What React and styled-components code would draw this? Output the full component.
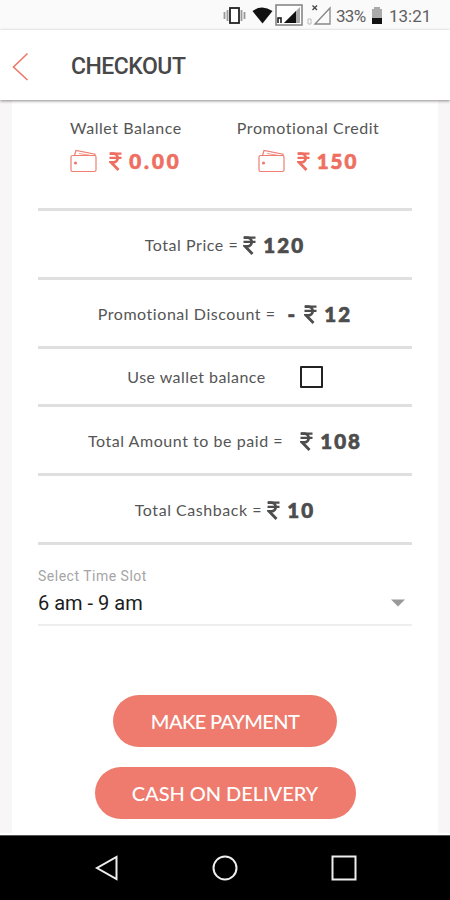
import { useState } from "react";
import styled, { createGlobalStyle } from "styled-components";

const GlobalStyle = createGlobalStyle`
  * {
    box-sizing: border-box;
  }

  body {
    margin: 0;
    background: #fff;
    font-family: Lato, "Liberation Sans", sans-serif;
  }
`;

const Screen = styled.div`
  display: flex;
  flex-direction: column;
  width: 450px;
  height: 900px;
  overflow: hidden;
  background: #fff;
`;

const StatusBar = styled.div`
  display: flex;
  align-items: center;
  flex: 0 0 30px;
  padding: 2px 19px 0 0;
  justify-content: flex-end;
  background: #fafafa;
  color: #606060;
  font-family: Roboto, sans-serif;
  font-size: 17px;
  line-height: 28px;
`;

const StatusIcons = styled.svg`
  display: block;
  width: 112px;
  height: 28px;
  margin-right: 3px;
`;

const Battery = styled.svg`
  display: block;
  width: 12px;
  height: 20px;
  margin: 0 6px 0 4px;
`;

const StatusText = styled.span`
  width: ${(props) => props.$width}px;
  white-space: nowrap;
  letter-spacing: ${(props) => props.$spacing || 0}px;
`;

const Header = styled.header`
  display: flex;
  align-items: center;
  flex: 0 0 70px;
  padding: 3px 0 0 12px;
  background: #fff;
  box-shadow: 0 1px 3px rgba(0, 0, 0, 0.45);
  z-index: 1;
`;

const BackIcon = styled.svg`
  display: block;
  width: 17px;
  height: 30px;
  margin-right: 42px;
`;

const Title = styled.h1`
  margin: 0;
  padding-top: 1px;
  color: #484848;
  font-family: Roboto, sans-serif;
  font-size: 23px;
  font-weight: 500;
  line-height: 30px;
  letter-spacing: -0.5px;
`;

const Content = styled.main`
  flex: 0 0 733px;
  padding: 15px 26px 0;
  border: solid #f8f6f7;
  border-width: 0 12px;
`;

const Balances = styled.section`
  display: flex;
  height: 96px;
  padding-left: 32px;
  gap: 55px;
  border-bottom: 3px solid #dfdfdf;
`;

const Balance = styled.div`
  display: flex;
  flex-direction: column;
  align-items: center;
  gap: 7px;
`;

const Label = styled.span`
  color: #555;
  font-size: 16px;
  line-height: 26px;
  letter-spacing: ${(props) => props.$spacing ?? 0.55}px;
  white-space: nowrap;
`;

const BalanceValue = styled.div`
  display: flex;
  align-items: center;
  gap: 12px;
`;

const WalletIcon = styled.svg`
  display: block;
  width: 27px;
  height: 24px;
`;

const Amount = styled.strong`
  display: flex;
  align-items: center;
  gap: 7px;
  color: ${(props) => props.$color || "#4d4d4d"};
  font-size: 20.5px;
  font-weight: 900;
  line-height: 26px;
  letter-spacing: ${(props) => props.$spacing || 2.1}px;
  -webkit-text-stroke: 0.7px currentColor;
  white-space: nowrap;
`;

const RupeeIcon = styled.svg`
  display: block;
  width: 13px;
  height: 19px;
`;

const Row = styled.div`
  display: flex;
  align-items: center;
  justify-content: center;
  gap: ${(props) => props.$gap}px;
  height: ${(props) => props.$height || 69}px;
  padding-top: ${(props) => props.$top ?? 2}px;
  border-bottom: 3px solid #dfdfdf;
`;

const Checkbox = styled.button`
  width: 23px;
  height: 22px;
  padding: 0;
  border: 2px solid #222;
  border-radius: 1px;
  background: ${(props) => (props.$checked ? "#ee7b6d" : "#fff")};
`;

const TimeSlot = styled.section`
  height: 81px;
  padding-top: 20px;
  border-bottom: 2px solid #eee;
`;

const SlotLabel = styled.div`
  color: #a5a5a5;
  font-family: Roboto, sans-serif;
  font-size: 14px;
  line-height: 22px;
  letter-spacing: 0.5px;
`;

const SlotValue = styled.div`
  display: flex;
  align-items: center;
  justify-content: space-between;
  padding-right: 7px;
  color: #1c1c1c;
  font-family: Roboto, sans-serif;
  font-size: 20px;
  line-height: 32px;
`;

const Caret = styled.svg`
  display: block;
  width: 14px;
  height: 8px;
`;

const Actions = styled.div`
  display: flex;
  flex-direction: column;
  align-items: center;
  gap: 20px;
  padding-top: 69px;
`;

const ActionButton = styled.button`
  width: ${(props) => props.$width}px;
  height: 52px;
  padding: 0;
  border: none;
  border-radius: 26px;
  background: #ee7b6d;
  color: #fff;
  font-family: inherit;
  font-size: 20px;
  font-weight: 500;
  letter-spacing: ${(props) => props.$spacing}px;
`;

const NavBar = styled.nav`
  display: flex;
  align-items: center;
  justify-content: space-between;
  height: 65px;
  margin-top: 2px;
  padding: 0 92px;
  background: #000;
  border-top: 1px solid #555;
`;

const NavIcon = styled.svg`
  display: block;
  width: 28px;
  height: 28px;
  fill: none;
  stroke: #eee;
  stroke-width: 2;
`;

function Rupee() {
  return (
    <RupeeIcon viewBox="0 0 13 19" fill="none" stroke="currentColor">
      <path d="M0.5 1.7H12.5M0.5 5.8H12.5" strokeWidth="2.2" />
      <path d="M1 1.7H4.5C10 1.7 10 10.3 4.5 10.3H2L9.5 18" strokeWidth="2.8" />
    </RupeeIcon>
  );
}

function Wallet() {
  return (
    <WalletIcon viewBox="0 0 27 24" fill="none" stroke="#ee7f72" strokeWidth="1.2">
      <rect x="1" y="6.5" width="25" height="16" rx="1.5" />
      <path d="M4.5 6.5L6 1.5L25 5.2V7" />
      <path d="M9 4.5L21 6.5" strokeWidth="0.8" />
      <circle cx="5.5" cy="14" r="1" fill="#ee6b5c" />
    </WalletIcon>
  );
}

function Price({ value, color, spacing }) {
  return (
    <Amount $color={color} $spacing={spacing}>
      <Rupee />
      {value}
    </Amount>
  );
}

export default function App() {
  const [useWallet, setUseWallet] = useState(false);

  return (
    <>
      <GlobalStyle />
      <Screen>
        <StatusBar>
          <StatusIcons viewBox="0 0 112 28">
            <rect x="9" y="6" width="9" height="15" fill="#fff" stroke="#222" strokeWidth="1.8" />
            <path d="M6.5 8V19M3.5 10V17M20.5 8V19M23.5 10V17" stroke="#999" strokeWidth="1.8" />
            <path d="M31.5 9Q41 2 51.5 9L41.5 21.5Z" fill="#111" />
            <rect x="55" y="3" width="26" height="20" fill="#fff" stroke="#888" strokeWidth="1.6" />
            <path d="M63 21L79 5V21Z" fill="#aaa" />
            <path d="M63 21L75 9V21Z" fill="#111" />
            <path d="M57 21V16H60V21" fill="none" stroke="#111" strokeWidth="1.5" />
            <path d="M94 22L109 6V22Z" fill="none" stroke="#888" strokeWidth="1.3" />
            <path d="M91.5 3.5L96 8M96 3.5L91.5 8" stroke="#444" strokeWidth="1.3" />
            <path d="M87 22V17H90V22Z" fill="none" stroke="#bbb" />
          </StatusIcons>
          <StatusText $width={31} $spacing={-0.7}>33%</StatusText>
          <Battery viewBox="0 0 12 20">
            <path d="M3 1H9V3H11V12H1V3H3Z" fill="#aaa" />
            <path d="M1 12H11V18H1Z" fill="#111" />
          </Battery>
          <StatusText $width={42}>13:21</StatusText>
        </StatusBar>

        <Header>
          <BackIcon viewBox="0 0 17 30" fill="none" stroke="#ee7869" strokeWidth="1.6">
            <path d="M15.5 1.5L1.5 15L15.5 28" />
          </BackIcon>
          <Title>CHECKOUT</Title>
        </Header>

        <Content>
          <Balances>
            <Balance>
              <Label>Wallet Balance</Label>
              <BalanceValue>
                <Wallet />
                <Price value="0.00" color="#ee6f61" spacing={3} />
              </BalanceValue>
            </Balance>
            <Balance>
              <Label>Promotional Credit</Label>
              <BalanceValue>
                <Wallet />
                <Price value="150" color="#ee6f61" />
              </BalanceValue>
            </Balance>
          </Balances>

          <Row $gap={5}>
            <Label>Total Price =</Label>
            <Price value="120" />
          </Row>
          <Row $gap={12}>
            <Label>Promotional Discount =</Label>
            <Amount>
              -
              <Price value="12" />
            </Amount>
          </Row>
          <Row $gap={34} $height={58} $top={0}>
            <Label $spacing={0.45}>Use wallet balance</Label>
            <Checkbox $checked={useWallet} onClick={() => setUseWallet(!useWallet)} />
          </Row>
          <Row $gap={17}>
            <Label>Total Amount to be paid =</Label>
            <Price value="108" />
          </Row>
          <Row $gap={5}>
            <Label>Total Cashback =</Label>
            <Price value="10" />
          </Row>

          <TimeSlot>
            <SlotLabel>Select Time Slot</SlotLabel>
            <SlotValue>
              6 am - 9 am
              <Caret viewBox="0 0 14 8">
                <path d="M0 0.5H14L7 7.5Z" fill="#999" />
              </Caret>
            </SlotValue>
          </TimeSlot>

          <Actions>
            <ActionButton $width={224} $spacing={-0.6}>MAKE PAYMENT</ActionButton>
            <ActionButton $width={261} $spacing={-0.05}>CASH ON DELIVERY</ActionButton>
          </Actions>
        </Content>

        <NavBar>
          <NavIcon viewBox="0 0 28 28">
            <path d="M24.5 3V25L5 14Z" />
          </NavIcon>
          <NavIcon viewBox="0 0 28 28">
            <circle cx="14" cy="14" r="11.5" />
          </NavIcon>
          <NavIcon viewBox="0 0 28 28">
            <rect x="2.5" y="2.5" width="23" height="23" />
          </NavIcon>
        </NavBar>
      </Screen>
    </>
  );
}
